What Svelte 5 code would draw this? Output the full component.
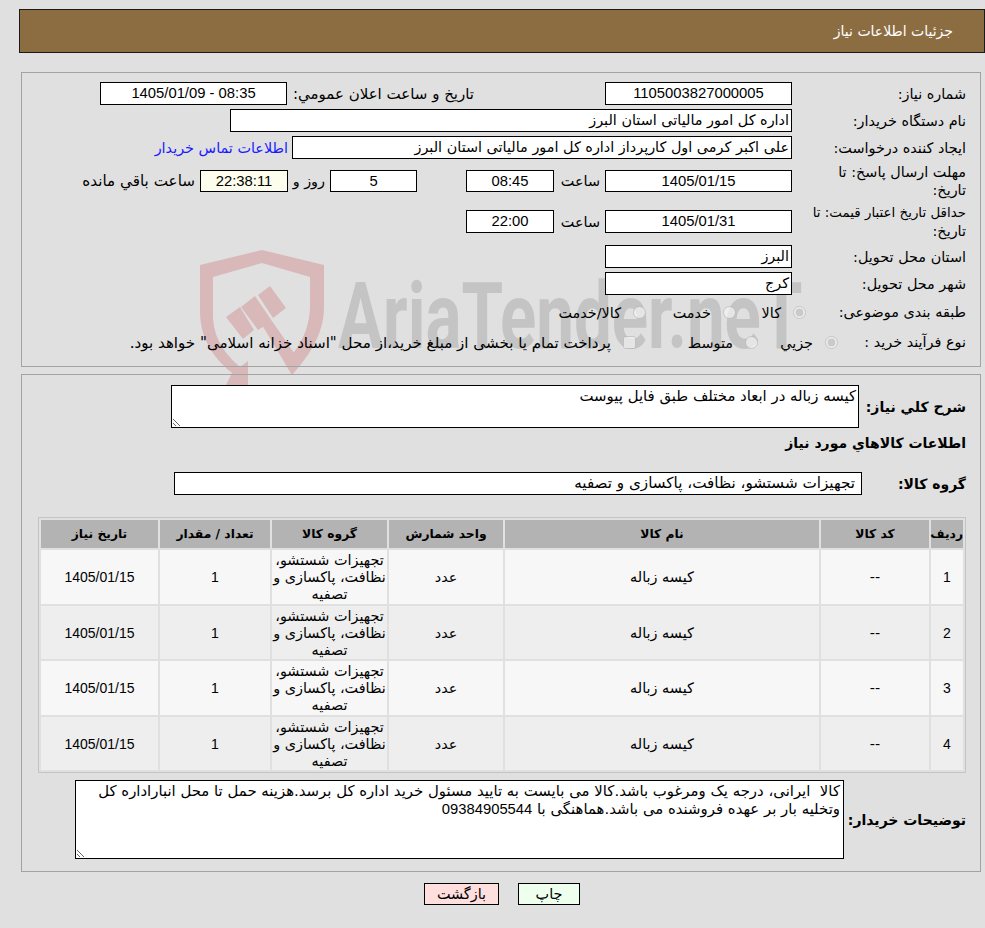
<script lang="ts">
  const rows = [1, 2, 3, 4];
  const group = "تجهیزات شستشو، نظافت، پاکسازی و تصفیه";
</script>

<div class="page" dir="rtl">
  <div class="watermark" dir="ltr" aria-hidden="true">
    <svg class="shield" width="140" height="140" viewBox="0 0 140 140">
      <path d="M0 20 L62 5 L124 20 L124 62 C124 90 108 112 92 130 L85 118 C100 102 110 84 110 60 L110 32 L62 18 L13 32 L13 70 C13 92 24 108 40 122 L48 116 L48 140 L26 140 L32 128 C12 112 0 92 0 66 Z" />
      <path d="M58 50 L70 41 L86 63 L73 73 Z M41 62 L55 51 L72 76 L58 85 Z M26 72 L40 62 L54 85 L43 94 Z" />
      <path d="M62 80 L72 76 L101 118 L92 130 Z" />
    </svg>
    <span class="brand">AriaTender.neT</span>
  </div>

  <header class="title">جزئیات اطلاعات نیاز</header>

  <section class="panel first">
    <div class="row">
      <div class="lbl">شماره نیاز:</div>
      <div class="box w187 num">1105003827000005</div>
      <div class="lbl2">تاریخ و ساعت اعلان عمومي:</div>
      <div class="box w187 num" dir="ltr">1405/01/09 - 08:35</div>
    </div>
    <div class="row">
      <div class="lbl">نام دستگاه خریدار:</div>
      <div class="box start w562">اداره کل امور مالیاتی استان البرز</div>
    </div>
    <div class="row">
      <div class="lbl">ایجاد کننده درخواست:</div>
      <div class="box start w500">علی اکبر کرمی اول کارپرداز اداره کل امور مالیاتی استان البرز</div>
      <span class="contact">اطلاعات تماس خریدار</span>
    </div>
    <div class="row tall">
      <div class="lbl">مهلت ارسال پاسخ: تا<br />تاریخ:</div>
      <div class="box w187 low num">1405/01/15</div>
      <span class="unit w51">ساعت</span>
      <div class="box w88 low num">08:45</div>
      <div class="box w87 low num days">5</div>
      <span class="unit w42">روز و</span>
      <div class="box w88 low num clock">22:38:11</div>
      <span class="unit wide">ساعت باقي مانده</span>
    </div>
    <div class="row tall">
      <div class="lbl fit">حداقل تاریخ اعتبار قیمت: تا<br /><span class="base">تاریخ:</span></div>
      <div class="box w187 num">1405/01/31</div>
      <span class="unit w51">ساعت</span>
      <div class="box w88 num">22:00</div>
    </div>
    <div class="row delivery">
      <div class="lbl">استان محل تحویل:</div>
      <div class="box start w187">البرز</div>
    </div>
    <div class="row">
      <div class="lbl">شهر محل تحویل:</div>
      <div class="box start w187">کرج</div>
    </div>
    <div class="row choice subject">
      <div class="lbl">طبقه بندی موضوعی:</div>
      <input type="radio" name="subject" checked disabled />
      <span class="opt w45">کالا</span>
      <input type="radio" name="subject" disabled />
      <span class="opt w65">خدمت</span>
      <input type="radio" name="subject" disabled />
      <span class="opt">کالا/خدمت</span>
    </div>
    <div class="row choice process">
      <div class="lbl">نوع فرآیند خرید :</div>
      <input type="radio" name="process" checked disabled />
      <span class="opt w55">جزیي</span>
      <input type="radio" name="process" disabled />
      <span class="opt w97">متوسط</span>
      <input type="checkbox" disabled />
      <span class="opt long">پرداخت تمام یا بخشی از مبلغ خرید،از محل "اسناد خزانه اسلامی" خواهد بود.</span>
    </div>
  </section>

  <section class="panel second">
    <div class="row desc">
      <div class="blbl">شرح كلي نیاز:</div>
      <div class="area short-area">کیسه زباله در ابعاد مختلف طبق فایل پیوست</div>
    </div>
    <h3 class="heading">اطلاعات كالاهاي مورد نیاز</h3>
    <div class="row goods">
      <div class="blbl">گروه کالا:</div>
      <div class="box start goods-box">{group}</div>
    </div>

    <table>
      <colgroup>
        <col style="width:32px" /><col style="width:108px" /><col style="width:314px" /><col style="width:114px" /><col style="width:115px" /><col style="width:110px" /><col style="width:117px" />
      </colgroup>
      <thead>
        <tr>
          <th>ردیف</th><th>کد کالا</th><th>نام کالا</th><th>واحد شمارش</th><th>گروه کالا</th><th>تعداد / مقدار</th><th>تاریخ نیاز</th>
        </tr>
      </thead>
      <tbody>
        {#each rows as n}
          <tr>
            <td class="num">{n}</td>
            <td>--</td>
            <td>کیسه زباله</td>
            <td>عدد</td>
            <td class="grp">{group}</td>
            <td class="num">1</td>
            <td class="num">1405/01/15</td>
          </tr>
        {/each}
      </tbody>
    </table>

    <div class="row notes">
      <div class="blbl">توضیحات خریدار:</div>
      <div class="area notes-area">کالا&nbsp; ایرانی، درجه یک ومرغوب باشد.کالا می بایست به تایید مسئول خرید اداره کل برسد.هزینه حمل تا محل انباراداره کل وتخلیه بار بر عهده فروشنده می باشد.هماهنگی با <span class="num">09384905544</span></div>
    </div>
  </section>

  <div class="actions">
    <button class="btn print">چاپ</button>
    <button class="btn back">بازگشت</button>
  </div>
</div>

<style>
  :global(body) {
    margin: 0;
    background: #e0e0e0;
  }

  .page {
    position: relative;
    width: 985px;
    height: 928px;
    padding-top: 9px;
    box-sizing: border-box;
    overflow: hidden;
    font-family: "DejaVu Sans", sans-serif;
    font-size: 14.4px;
    color: #000;
  }

  .watermark {
    position: absolute;
    left: 200px;
    top: 245px;
    width: 640px;
    height: 142px;
    pointer-events: none;
  }

  .shield {
    position: absolute;
    left: 0;
    top: 0;
  }

  .shield path {
    fill: #d9b8b9;
  }

  .brand {
    position: absolute;
    left: 138px;
    top: 22px;
    font-family: "Roboto", sans-serif;
    font-weight: 700;
    font-size: 92px;
    line-height: 100px;
    color: #c4c4c4;
    white-space: nowrap;
    transform-origin: left center;
    transform: scaleX(0.73);
  }

  .title {
    position: relative;
    margin-left: 19px;
    height: 44px;
    box-sizing: border-box;
    padding-right: 31px;
    background: #8c6d42;
    border: 1px solid #1a1a1a;
    color: #fff;
    font-size: 14px;
    line-height: 42px;
  }

  .panel {
    position: relative;
    width: 960px;
    margin-right: 4px;
    box-sizing: border-box;
    border: 1px solid #a3a3a3;
    padding-right: 14px;
  }

  .panel.first {
    margin-top: 19px;
    height: 295px;
    padding-top: 9px;
  }

  .panel.second {
    margin-top: 7px;
    height: 498px;
    padding-top: 10px;
  }

  .row {
    display: flex;
    align-items: center;
    margin-bottom: 4px;
  }

  .row.tall {
    height: 36px;
  }

  .row.tall + .row.tall {
    height: 37px;
  }

  .row.delivery {
    margin-top: 5px;
  }

  .lbl {
    width: 174px;
    flex: none;
    box-sizing: border-box;
    line-height: 18px;
  }

  .lbl.fit {
    padding-top: 2px;
    font-size: 13.4px;
    white-space: nowrap;
  }

  .base {
    font-size: 14.4px;
  }

  .lbl2 {
    width: 187px;
    margin-right: 131px;
    flex: none;
    font-size: 15px;
  }

  .box {
    flex: none;
    box-sizing: border-box;
    height: 23px;
    line-height: 21px;
    border: 1px solid #000;
    background: #fff;
    text-align: center;
    white-space: nowrap;
    overflow: hidden;
  }

  .box.low {
    height: 22px;
    line-height: 20px;
  }

  .box.start {
    text-align: right;
    padding-right: 2px;
  }

  .num {
    font-family: "Liberation Sans", sans-serif;
    font-size: 14.8px;
  }

  .w187 { width: 187px; }
  .w88 { width: 88px; }
  .w87 { width: 87px; }
  .w562 { width: 562px; }
  .w500 { width: 500px; }

  .days {
    margin-right: 49px;
  }

  .clock {
    background: #fdfdee;
  }

  .contact {
    margin-right: 4px;
    color: #1a1aff;
    white-space: nowrap;
  }

  .unit {
    box-sizing: border-box;
    flex: none;
    padding-right: 5px;
    white-space: nowrap;
  }

  .unit.w51 { width: 51px; }
  .unit.w42 { width: 42px; }

  .unit.wide {
    font-size: 15.2px;
  }

  .row.choice {
    height: 20px;
  }

  .row.subject {
    margin: 7px 0 10px;
  }

  .subject .lbl {
    width: 160px;
  }

  .process .lbl {
    width: 128px;
  }

  input {
    flex: none;
    width: 13px;
    height: 13px;
    margin: 0;
  }

  .opt {
    box-sizing: content-box;
    flex: none;
    white-space: nowrap;
    margin-right: 12px;
    padding-top: 2px;
  }

  .opt.long {
    font-size: 15.1px;
  }

  .w45 { width: 45px; }
  .w65 { width: 65px; }
  .w55 { width: 55px; }
  .w97 { width: 97px; }

  .blbl {
    flex: none;
    font-weight: 700;
    font-size: 14px;
  }

  .desc .blbl {
    width: 107px;
  }

  .area {
    box-sizing: border-box;
    flex: none;
    border: 1px solid #000;
    background: #fff;
    padding: 2px;
    overflow: auto;
    resize: both;
    font-size: 14.9px;
    line-height: 17.5px;
  }

  .short-area {
    width: 688px;
    height: 43px;
  }

  .row.desc {
    margin-bottom: 6px;
  }

  .heading {
    margin: 0 0 20px;
    font-size: 14px;
    font-weight: 700;
    line-height: 18px;
  }

  .row.goods {
    margin-bottom: 22px;
  }

  .goods .blbl {
    width: 104px;
  }

  .goods-box {
    width: 688px;
    font-size: 15.2px;
  }

  .box.goods-box {
    padding-right: 6px;
  }

  table {
    width: 928px;
    table-layout: fixed;
    border-collapse: separate;
    border-spacing: 2px;
    border: 1px solid #c4c4c4;
    font-size: 14.4px;
    text-align: center;
  }

  th {
    height: 28px;
    padding: 0;
    background: #b3b3b3;
    font-size: 12.3px;
    font-weight: 700;
  }

  td {
    height: 53.5px;
    padding: 2px 1px 0;
    line-height: 17px;
    box-sizing: border-box;
  }

  td.num {
    font-size: 14px;
  }

  tbody tr:nth-child(odd) td {
    background: #f7f7f7;
  }

  tbody tr:nth-child(even) td {
    background: #eeeeee;
  }

  .row.notes {
    margin-top: 7px;
  }

  .notes .blbl {
    width: 122px;
  }

  .notes-area {
    width: 769px;
    height: 79px;
    padding: 2px 3px;
  }

  .actions {
    display: flex;
    gap: 19px;
    justify-content: flex-start;
    margin-top: 11px;
    padding-right: 405px;
  }

  .btn {
    height: 22px;
    padding: 0;
    box-sizing: border-box;
    border: 1px solid #000;
    font-family: inherit;
    font-size: 14.4px;
    color: #000;
  }

  .print {
    width: 62px;
    background: #eeffee;
  }

  .back {
    width: 75px;
    background: #ffdede;
  }
</style>
